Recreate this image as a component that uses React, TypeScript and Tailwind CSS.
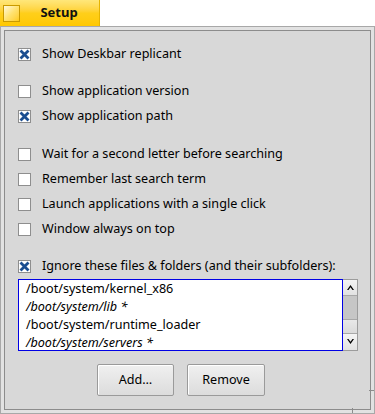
import React from 'react';

const font = { fontFamily: '"Noto Sans", "DejaVu Sans", sans-serif' };

const Check: React.FC<{ checked?: boolean; label: string }> = ({ checked, label }) => (
  <div className="flex items-center h-[25px]">
    <div className="w-[13px] h-[13px] border border-[#8e8e8e] bg-white shrink-0 flex items-center justify-center">
      {checked && (
        <svg width="11" height="11" viewBox="0 0 11 11">
          <path d="M1.5 1.5 L9.5 9.5 M9.5 1.5 L1.5 9.5" stroke="#1b4e91" strokeWidth="2.8" fill="none" />
        </svg>
      )}
    </div>
    <span className="ml-[11px] text-[12.6px] text-black leading-none whitespace-nowrap">{label}</span>
  </div>
);

const ArrowBtn: React.FC<{ up?: boolean }> = ({ up }) => (
  <div className="h-[16px] bg-gradient-to-b from-[#f4f4f4] to-[#e2e2e2] flex items-center justify-center">
    <svg width="7" height="5" viewBox="0 0 7 5">
      <path d={up ? 'M0 5 L3.5 0 L7 5 L5.5 5 L3.5 2.2 L1.5 5 Z' : 'M0 0 L3.5 5 L7 0 L5.5 0 L3.5 2.8 L1.5 0 Z'} fill="#000" />
    </svg>
  </div>
);

const Button: React.FC<{ label: string; w: string }> = ({ label, w }) => (
  <button
    className={`${w} h-[32px] border border-[#9a9a9a] rounded-[2px] bg-gradient-to-b from-[#f0f0f0] to-[#dcdcdc] shadow-[inset_1px_1px_0_#ffffff] text-[12.6px] text-black`}
  >
    {label}
  </button>
);

const App: React.FC = () => {
  const items = [
    { path: '/boot/system/kernel_x86', italic: false },
    { path: '/boot/system/lib *', italic: true },
    { path: '/boot/system/runtime_loader', italic: false },
    { path: '/boot/system/servers *', italic: true },
  ];

  return (
    <div className="w-[375px] h-[414px] bg-white flex flex-col overflow-hidden" style={font}>
      {/* Tab */}
      <div className="flex h-[26px] shrink-0">
        <div className="w-[100px] h-[26px] flex items-center bg-gradient-to-b from-[#ffe77a] via-[#ffcf1a] to-[#ffc800] border-r border-[#e6b400]">
          <div className="ml-[3px] w-[17px] h-[17px] border border-[#c99a00] bg-gradient-to-br from-[#fff8d8] via-[#ffe270] to-[#ffcc00]" />
          <span className="flex-1 text-center pr-[1px] text-[13px] font-bold text-[#111]">Setup</span>
        </div>
      </div>

      {/* Frame */}
      <div className="relative flex-1 border border-[#a8a8a8] bg-[#e2e2e2] p-[3px]">
        <div className="h-full border border-[#8c8c8c] bg-[#d8d8d8] pl-[13px] pt-[11px]">
          <Check checked label="Show Deskbar replicant" />

          <div className="mt-[12px]">
            <Check label="Show application version" />
            <Check checked label="Show application path" />
          </div>

          <div className="mt-[13px]">
            <Check label="Wait for a second letter before searching" />
            <Check label="Remember last search term" />
            <Check label="Launch applications with a single click" />
            <Check label="Window always on top" />
          </div>

          <div className="mt-[12px]">
            <Check checked label="Ignore these files & folders (and their subfolders):" />
          </div>

          {/* List */}
          <div className="flex h-[72px]">
            <div className="w-[325px] h-[72px] border border-[#0000e5] bg-white overflow-hidden pl-[7px]">
              {items.map((it) => (
                <div key={it.path} className={`h-[18px] leading-[18px] text-[12.6px] text-black whitespace-nowrap ${it.italic ? 'italic' : ''}`}>
                  {it.path}
                </div>
              ))}
            </div>
            <div className="w-[15px] h-[72px] border border-l-0 border-[#9c9c9c] flex flex-col">
              <ArrowBtn up />
              <div className="h-[24px] bg-[#c6c6c6] border-t border-[#a8a8a8]" />
              <div className="h-[16px] bg-gradient-to-b from-[#e8e8e8] to-[#dadada] border-y border-[#a8a8a8]" />
              <div className="flex-1">
                <ArrowBtn />
              </div>
            </div>
          </div>

          {/* Buttons */}
          <div className="flex gap-[13px] pl-[79px] mt-[13px]">
            <Button label="Add…" w="w-[77px]" />
            <Button label="Remove" w="w-[78px]" />
          </div>
        </div>

        {/* resize notches */}
        <div className="absolute left-[351px] bottom-0 w-px h-[5px] bg-[#8c8c8c]" />
        <div className="absolute right-0 top-[363px] h-px w-[5px] bg-[#8c8c8c]" />
      </div>
    </div>
  );
};

export default App;
